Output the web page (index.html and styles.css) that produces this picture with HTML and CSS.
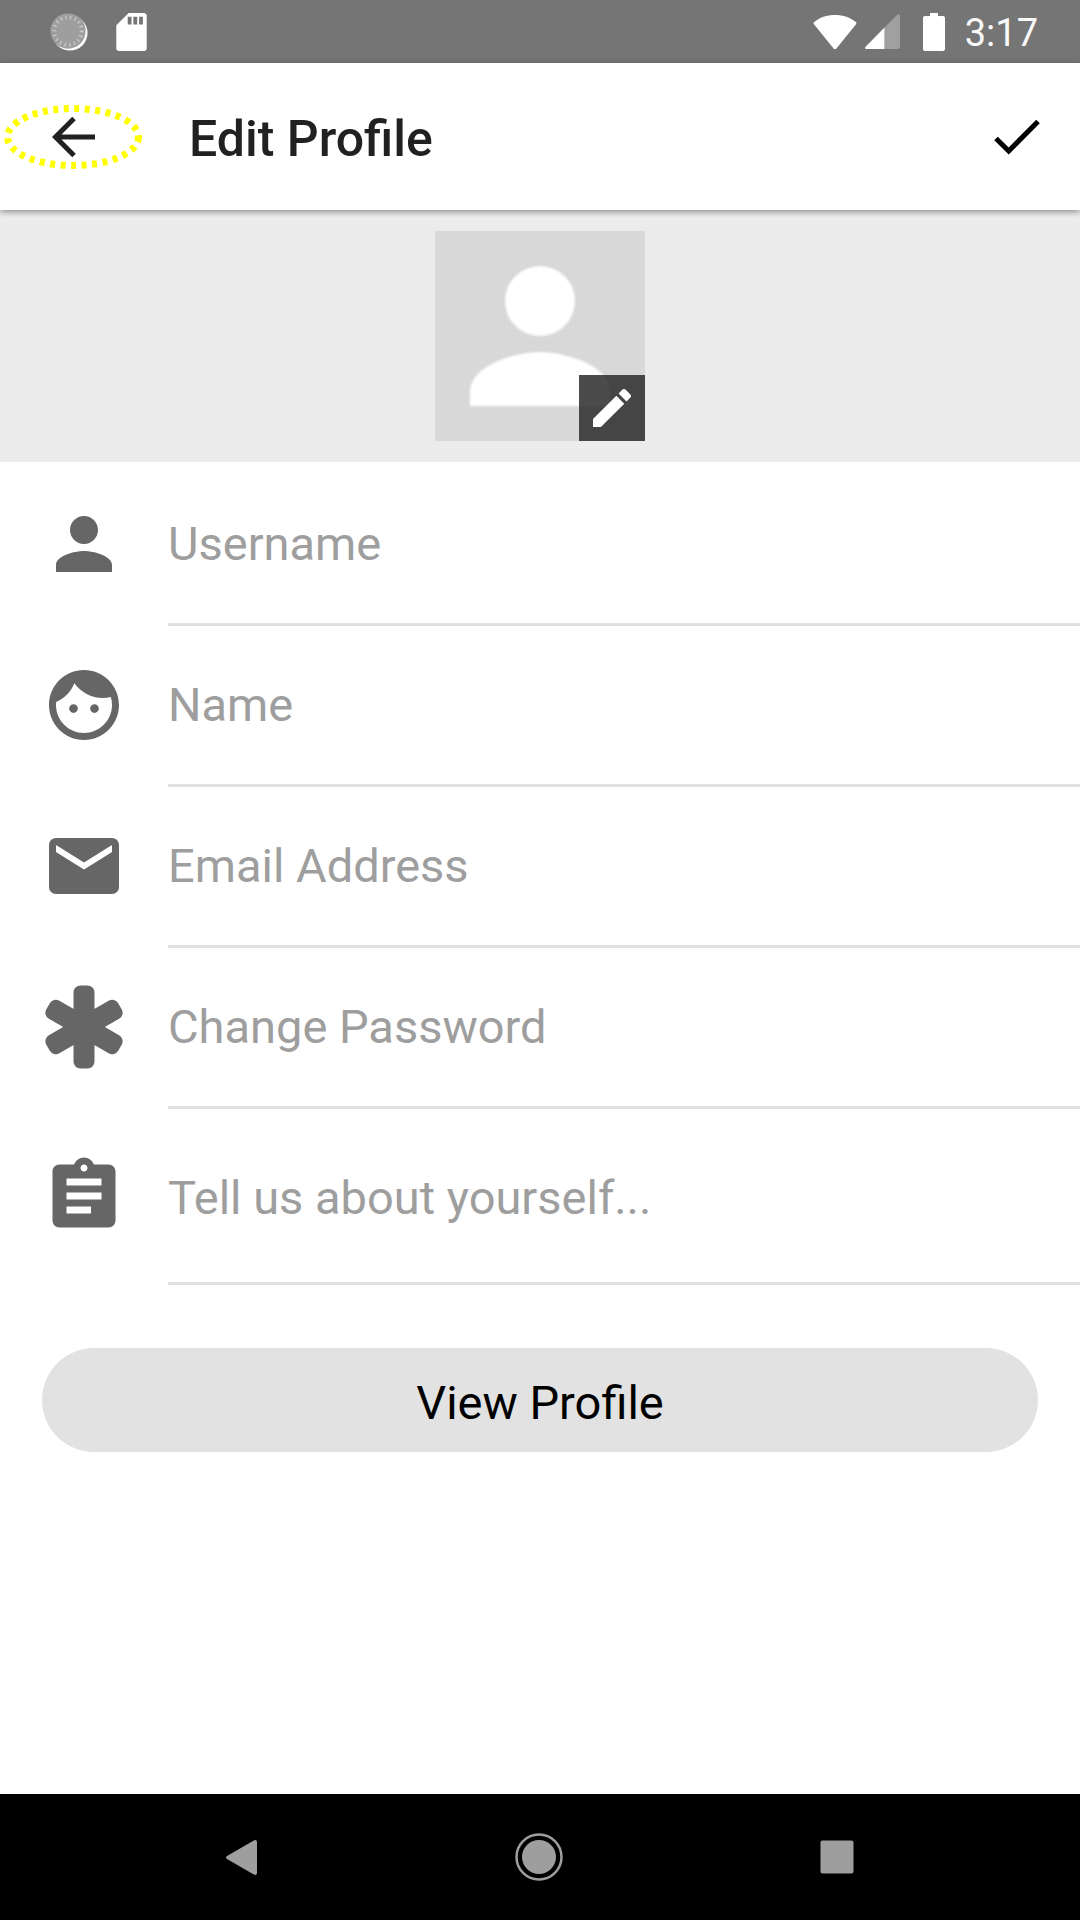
FILE: index.html
```html
<!DOCTYPE html>
<html lang="en">
<head>
    <meta charset="UTF-8">
    <meta name="viewport" content="width=device-width, initial-scale=1.0">
    <title>Edit Profile</title>
    <link rel="stylesheet" href="styles.css">
</head>
<body>
    <div class="screen">
        <div class="status-bar">
            <div class="status-left">
                <svg class="spinner" width="38" height="38" viewBox="0 0 40 40">
                    <circle cx="21" cy="21" r="18.500" fill="#fff"/>
                    <circle cx="19" cy="19" r="18.500" fill="#9e9e9e"/>
                    <circle cx="19" cy="19" r="14.500" fill="none" stroke="#c8c8c8" stroke-width="4" stroke-dasharray="1.400 3.600"/>
                </svg>
                <svg class="sd-card" width="31" height="38" viewBox="0 0 32 40">
                    <path d="M13 0h16c1.700 0 3 1.300 3 3v34c0 1.700-1.300 3-3 3H3c-1.700 0-3-1.300-3-3V13z" fill="#fff"/>
                    <path d="M12 4h4v8h-4zM18 4h4v8h-4zM24 4h4v8h-4z" fill="#757575"/>
                </svg>
            </div>
            <div class="status-right">
                <svg class="wifi" width="44" height="36" viewBox="0 0 46 38">
                    <path d="M23 1C14 1 7 3.500 1 8.500c-.8.700-.8 1.500-.2 2.200L21.500 36.500c.8 1 2.200 1 3 0L45.200 10.700c.6-.7.600-1.500-.200-2.200C39 3.500 32 1 23 1z" fill="#fff"/>
                </svg>
                <svg class="signal" width="35" height="35" viewBox="0 0 36 36">
                    <path d="M34 0c1.100 0 2 .9 2 2v32c0 1.100-.9 2-2 2H20V14z" fill="#a0a0a0"/>
                    <path d="M20 14v22H1.500C.3 36-.4 35 .6 33.800z" fill="#fff"/>
                </svg>
                <svg class="battery" width="22" height="38" viewBox="0 0 22 38">
                    <path d="M7 0h8v3h5c1.100 0 2 .9 2 2v31c0 1.100-.9 2-2 2H2c-1.100 0-2-.9-2-2V5c0-1.100.9-2 2-2h5z" fill="#fff"/>
                </svg>
                <span class="clock">3:17</span>
            </div>
        </div>

        <header class="app-bar">
            <div class="back">
                <svg class="back-ring" width="140" height="66" viewBox="0 0 140 66">
                    <ellipse cx="70" cy="33" rx="65.500" ry="28.500" fill="none" stroke="#ffff00" stroke-width="7" stroke-dasharray="5 5.500"/>
                </svg>
                <svg class="back-arrow" width="44" height="44" viewBox="0 0 44 44">
                    <path d="M43 22H4M22 3.500 3.500 22 22 40.500" fill="none" stroke="#212121" stroke-width="5"/>
                </svg>
            </div>
            <h1 class="title">Edit Profile</h1>
            <svg class="check" width="48" height="38" viewBox="0 0 48 38">
                <path d="M3 20.500 15.700 33 45 3.500" fill="none" stroke="#000" stroke-width="5"/>
            </svg>
        </header>

        <section class="photo-band">
            <div class="photo">
                <svg class="photo-figure" width="210" height="210" viewBox="0 0 210 210">
                    <circle cx="105" cy="70" r="35" fill="#fff"/>
                    <path d="M35 175v-14c0-28 48-40 70-40s70 12 70 40v14z" fill="#fff"/>
                </svg>
                <div class="photo-edit">
                    <svg width="38" height="38" viewBox="3 3 18 18">
                        <path d="M3 17.250V21h3.750L17.810 9.940l-3.750-3.750L3 17.250zM20.710 7.040c.39-.39.390-1.020 0-1.410l-2.340-2.340c-.39-.39-1.020-.39-1.410 0l-1.830 1.830 3.750 3.750 1.830-1.830z" fill="#fff"/>
                    </svg>
                </div>
            </div>
        </section>

        <form class="fields">
            <div class="field">
                <svg class="field-icon" viewBox="0 0 24 24"><path d="M12 12c2.210 0 4-1.790 4-4s-1.790-4-4-4-4 1.790-4 4 1.790 4 4 4zm0 2c-2.670 0-8 1.340-8 4v2h16v-2c0-2.660-5.330-4-8-4z"/></svg>
                <div class="field-text">Username</div>
            </div>
            <div class="field">
                <svg class="field-icon" viewBox="0 0 24 24"><path d="M9 11.750c-.69 0-1.250.56-1.250 1.250s.56 1.250 1.250 1.250 1.250-.56 1.250-1.250-.56-1.250-1.250-1.250zm6 0c-.69 0-1.250.56-1.250 1.250s.56 1.250 1.250 1.250 1.250-.56 1.250-1.250-.56-1.250-1.250-1.250zM12 2C6.480 2 2 6.480 2 12s4.480 10 10 10 10-4.480 10-10S17.520 2 12 2zm0 18c-4.410 0-8-3.590-8-8 0-.29.02-.58.05-.86 2.360-1.050 4.230-2.980 5.210-5.370C11.070 8.330 14.050 10 17.420 10c.78 0 1.530-.09 2.250-.26.21.71.33 1.470.33 2.260 0 4.410-3.590 8-8 8z"/></svg>
                <div class="field-text">Name</div>
            </div>
            <div class="field">
                <svg class="field-icon" viewBox="0 0 24 24"><path d="M20 4H4c-1.100 0-1.990.9-1.990 2L2 18c0 1.100.9 2 2 2h16c1.100 0 2-.9 2-2V6c0-1.100-.9-2-2-2zm0 4l-8 5-8-5V6l8 5 8-5v2z"/></svg>
                <div class="field-text">Email Address</div>
            </div>
            <div class="field">
                <svg class="field-icon" viewBox="0 0 84 84">
                    <rect x="31.500" y="0.500" width="21" height="83" rx="7"/>
                    <rect x="31.500" y="0.500" width="21" height="83" rx="7" transform="rotate(60 42 42)"/>
                    <rect x="31.500" y="0.500" width="21" height="83" rx="7" transform="rotate(-60 42 42)"/>
                </svg>
                <div class="field-text">Change Password</div>
            </div>
            <div class="field field-about">
                <svg class="field-icon" viewBox="0 0 24 24"><path d="M19 3h-4.180C14.400 1.840 13.300 1 12 1c-1.300 0-2.400.84-2.820 2H5c-1.100 0-2 .9-2 2v14c0 1.100.9 2 2 2h14c1.100 0 2-.9 2-2V5c0-1.100-.9-2-2-2zm-7 0c.55 0 1 .45 1 1s-.45 1-1 1-1-.45-1-1 .45-1 1-1zm2 14H7v-2h7v2zm3-4H7v-2h10v2zm0-4H7V7h10v2z"/></svg>
                <div class="field-text">Tell us about yourself...</div>
            </div>
        </form>

        <div class="actions">
            <button class="view-profile" type="button">View Profile</button>
        </div>

        <nav class="nav-bar">
            <svg width="31" height="35" viewBox="0 0 32 36"><path d="M30 0c1.100 0 2 .8 2 2v32c0 1.200-.9 2-2 2-.5 0-1-.2-1.300-.5L1 19.500c-1.300-.8-1.300-2.200 0-3L28.700.5C29 .2 29.500 0 30 0z" fill="#9e9e9e"/></svg>
            <svg width="48" height="48" viewBox="0 0 48 48"><circle cx="24" cy="24" r="22.500" fill="none" stroke="#9e9e9e" stroke-width="2.500"/><circle cx="24" cy="24" r="17" fill="#9e9e9e"/></svg>
            <svg width="34" height="34" viewBox="0 0 34 34"><rect width="33" height="33" x="0.500" y="0.500" rx="2" fill="#9e9e9e"/></svg>
        </nav>
    </div>
</body>
</html>
```

FILE: styles.css
```css
/* Resetting some default styles */
* {
    margin: 0;
    padding: 0;
    box-sizing: border-box;
}

body {
    font-family: 'Roboto', sans-serif;
    background: #fff;
}

.screen {
    width: 1080px;
    height: 1920px;
    display: flex;
    flex-direction: column;
    overflow: hidden;
}

.status-bar {
    height: 63px;
    background: #757575;
    display: flex;
    justify-content: space-between;
    align-items: center;
    padding: 0 42px 0 50px;
}

.status-left {
    display: flex;
    align-items: center;
    gap: 28px;
}

.status-right {
    display: flex;
    align-items: center;
}

.wifi {
    margin-right: 8px;
}

.signal {
    margin-right: 23px;
}

.battery {
    margin-right: 20px;
}

.clock {
    font-size: 38px;
    color: #fafafa;
    padding-top: 2px;
}

.app-bar {
    height: 147px;
    background: #fff;
    display: flex;
    align-items: center;
    padding-right: 39px;
    box-shadow: 0 2px 6px rgba(0, 0, 0, 0.4);
    position: relative;
    z-index: 1;
}

.back {
    width: 189px;
    height: 66px;
    position: relative;
    display: flex;
    align-items: center;
    padding-left: 52px;
}

.back-ring {
    position: absolute;
    left: 3px;
    top: 0;
}

.title {
    flex: 1;
    font-size: 50px;
    font-weight: 500;
    color: #212121;
    padding-top: 4px;
}

.photo-band {
    height: 252px;
    background: #ececec;
    display: flex;
    justify-content: center;
    padding-top: 21px;
}

.photo {
    width: 210px;
    height: 210px;
    background: #d8d8d8;
    position: relative;
}

.photo-figure {
    filter: blur(1px);
}

.photo-edit {
    position: absolute;
    right: 0;
    bottom: 0;
    width: 66px;
    height: 66px;
    background: rgba(44, 44, 44, 0.85);
    display: flex;
    align-items: center;
    justify-content: center;
}

.field {
    height: 161px;
    display: flex;
    align-items: center;
}

.field:first-child {
    height: 164px;
}

.field-about {
    height: 176px;
}

.field-icon {
    width: 84px;
    height: 84px;
    margin: 0 42px 3px;
    flex-shrink: 0;
    fill: #666;
}

.field:first-child .field-icon {
    margin-bottom: 1px;
}

.field-text {
    align-self: stretch;
    flex: 1;
    display: flex;
    align-items: center;
    font-size: 47px;
    color: #9e9e9e;
    border-bottom: 3px solid #e0e0e0;
    padding-bottom: 2px;
}

.field:first-child .field-text {
    padding-top: 2px;
    padding-bottom: 0;
}

.field-about .field-text {
    padding-top: 3px;
    padding-bottom: 0;
}

.actions {
    padding: 63px 42px 0;
    flex: 1;
}

.view-profile {
    width: 100%;
    height: 104px;
    border: none;
    border-radius: 52px;
    background: #e2e2e2;
    color: #000;
    font-family: inherit;
    font-size: 47px;
    padding-top: 5px;
}

.nav-bar {
    height: 126px;
    background: #000;
    display: flex;
    align-items: center;
    padding: 0 226px;
    justify-content: space-between;
}
```
